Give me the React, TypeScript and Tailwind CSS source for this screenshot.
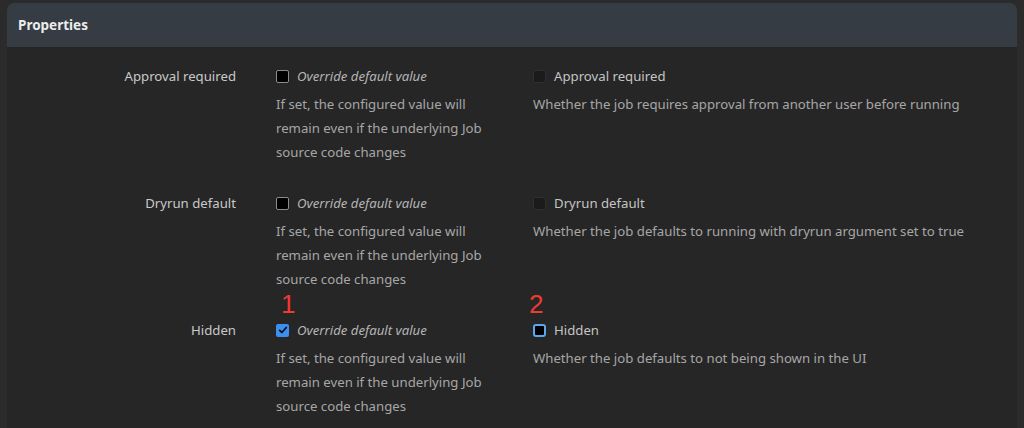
import React from "react";

interface Property {
  label: string;
  description: string;
  overridden: boolean;
  value: "off" | "focus";
  marker?: boolean;
}

const properties: Property[] = [
  {
    label: "Approval required",
    description: "Whether the job requires approval from another user before running",
    overridden: false,
    value: "off",
  },
  {
    label: "Dryrun default",
    description: "Whether the job defaults to running with dryrun argument set to true",
    overridden: false,
    value: "off",
  },
  {
    label: "Hidden",
    description: "Whether the job defaults to not being shown in the UI",
    overridden: true,
    value: "focus",
    marker: true,
  },
];

const OverrideBox = ({ checked }: { checked: boolean }) =>
  checked ? (
    <span className="flex h-[13px] w-[13px] items-center justify-center rounded-[2px] bg-[#3b8ff0]">
      <svg className="h-[10px] w-[10px]" viewBox="0 0 12 12" fill="none">
        <path
          d="M2 6.4l2.6 2.6L10 3"
          stroke="#0a0a0a"
          strokeWidth={2}
          strokeLinecap="round"
          strokeLinejoin="round"
        />
      </svg>
    </span>
  ) : (
    <span className="block h-[13px] w-[13px] rounded-[2px] border border-[#8c8c8c] bg-black" />
  );

const ValueBox = ({ state }: { state: "off" | "focus" }) =>
  state === "focus" ? (
    <span className="block h-[13px] w-[13px] rounded-[3px] border-2 border-[#5aa7ee] bg-black" />
  ) : (
    <span className="block h-[13px] w-[13px] rounded-[2px] border border-[#2e2e2e] bg-[#1b1b1b]" />
  );

const PropertyRow = ({ prop }: { prop: Property }) => {
  return (
    <div className="relative grid grid-cols-[269px_257px_1fr] pb-[27px] leading-6">
      {prop.marker && (
        <>
          {/* annotation numbers */}
          <span className="absolute left-[274px] top-[-27px] font-['Liberation_Sans',sans-serif] text-[26px] leading-none text-[#ee3a33]">
            1
          </span>
          <span className="absolute left-[522px] top-[-27px] font-['Liberation_Sans',sans-serif] text-[26px] leading-none text-[#ee3a33]">
            2
          </span>
        </>
      )}
      <div className="pr-[40px] text-right text-[#c9c9c9]">{prop.label}</div>
      <div className="pr-[36px]">
        <div className="flex items-center gap-[8px]">
          <OverrideBox checked={prop.overridden} />
          <span className="italic text-[#b5b5b5]">Override default value</span>
        </div>
        <p className="mt-[4px] text-[#a6a6a6]">
          If set, the configured value will remain even if the underlying Job
          source code changes
        </p>
      </div>
      <div>
        <div className="flex items-center gap-[8px]">
          <ValueBox state={prop.value} />
          <span className="text-[#c4c4c4]">{prop.label}</span>
        </div>
        <p className="mt-[4px] text-[#a6a6a6]">{prop.description}</p>
      </div>
    </div>
  );
};

export default function App() {
  return (
    <div className="h-[428px] w-[1024px] overflow-hidden bg-[#2b2b2b] px-[7px] pt-[3px] font-['Noto_Sans',sans-serif] text-[13.2px]">
      <div className="h-[460px] overflow-hidden rounded-t-[7px] bg-[#262626]">
        <div className="flex h-[44px] items-center bg-[#353c44] px-[11px]">
          <h2 className="text-[13.5px] font-bold text-[#ececec]">Properties</h2>
        </div>
        <div className="pt-[17px]">
          {properties.map((p) => (
            <PropertyRow key={p.label} prop={p} />
          ))}
        </div>
      </div>
    </div>
  );
}
